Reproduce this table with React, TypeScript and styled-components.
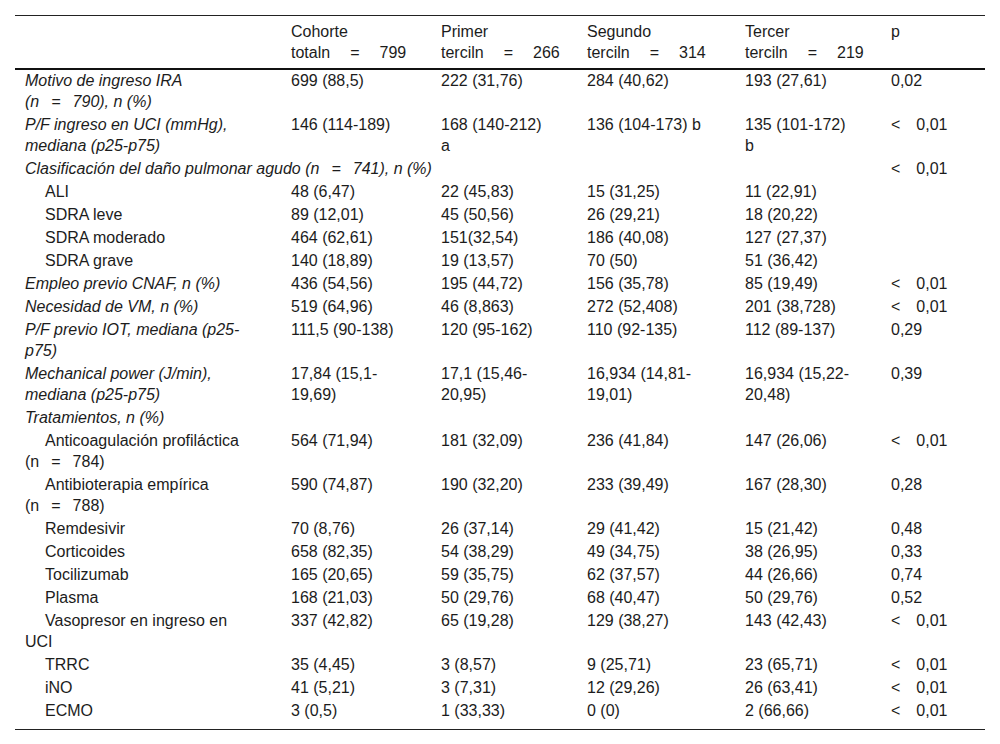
import { createGlobalStyle, styled } from 'styled-components';

const GlobalStyle = createGlobalStyle`
  body {
    margin: 0;
    background: #fff;
    font-family: 'Liberation Sans', Arial, sans-serif;
    color: #1c1c1c;
  }
`;

const Page = styled.div`
  padding: 15px 15px 0 15px;
`;

const Table = styled.table`
  width: 970px;
  border-collapse: collapse;
  table-layout: fixed;
  font-size: 16px;
  line-height: 21px;
  border-top: 1px solid #222;
  border-bottom: 1px solid #222;
`;

const HeadCell = styled.th`
  text-align: left;
  font-weight: normal;
  vertical-align: top;
  padding: 5px 34px 5px 10px;
  border-bottom: 2px solid #111;

  &:nth-child(5) {
    padding-right: 30px;
  }

  &:last-child {
    padding-right: 10px;
  }
`;

const Cell = styled.td<{ $italic?: boolean; $indent?: boolean }>`
  vertical-align: top;
  padding: 1px 34px 1px 10px;
  font-style: ${(p) => (p.$italic ? 'italic' : 'normal')};
  text-indent: ${(p) => (p.$indent ? '20px' : '0')};

  &:nth-child(5) {
    padding-right: 30px;
  }

  &:last-child {
    padding-right: 10px;
  }
`;

const FirstRow = styled.tr`
  td {
    padding-top: 0;
  }
`;

const LastRow = styled.tr`
  td {
    padding-bottom: 8px;
  }
`;

const Keep = styled.span`
  white-space: nowrap;
`;

const Gap = styled.span<{ $w: number }>`
  display: inline-block;
  width: ${(p) => p.$w}px;
`;

// "(n = 790)" style counts never break inside
const N = ({ pre = '(n', v, post = ')', w = 12 }: { pre?: string; v: string; post?: string; w?: number }) => (
  <Keep>
    {pre}
    <Gap $w={w} />=<Gap $w={w} />
    {v}
    {post}
  </Keep>
);

const Lt = () => (
  <Keep>
    {'<'}
    <Gap $w={16} />
    {'0,01'}
  </Keep>
);

type Row = {
  label: React.ReactNode;
  italic?: boolean;
  indent?: boolean;
  cells: React.ReactNode[];
  p: React.ReactNode;
};

const rows: Row[] = [
  {
    label: 'P/F ingreso en UCI (mmHg), mediana (p25-p75)',
    italic: true,
    cells: ['146 (114-189)', '168 (140-212) a', '136 (104-173) b', '135 (101-172) b'],
    p: <Lt />,
  },
];

const lungRows: Row[] = [
  { label: 'ALI', indent: true, cells: ['48 (6,47)', '22 (45,83)', '15 (31,25)', '11 (22,91)'], p: '' },
  { label: 'SDRA leve', indent: true, cells: ['89 (12,01)', '45 (50,56)', '26 (29,21)', '18 (20,22)'], p: '' },
  { label: 'SDRA moderado', indent: true, cells: ['464 (62,61)', '151(32,54)', '186 (40,08)', '127 (27,37)'], p: '' },
  { label: 'SDRA grave', indent: true, cells: ['140 (18,89)', '19 (13,57)', '70 (50)', '51 (36,42)'], p: '' },
  { label: 'Empleo previo CNAF, n (%)', italic: true, cells: ['436 (54,56)', '195 (44,72)', '156 (35,78)', '85 (19,49)'], p: <Lt /> },
  { label: 'Necesidad de VM, n (%)', italic: true, cells: ['519 (64,96)', '46 (8,863)', '272 (52,408)', '201 (38,728)'], p: <Lt /> },
  { label: 'P/F previo IOT, mediana (p25-p75)', italic: true, cells: ['111,5 (90-138)', '120 (95-162)', '110 (92-135)', '112 (89-137)'], p: '0,29' },
  {
    label: 'Mechanical power (J/min), mediana (p25-p75)',
    italic: true,
    cells: ['17,84 (15,1-19,69)', '17,1 (15,46-20,95)', '16,934 (14,81-19,01)', '16,934 (15,22-20,48)'],
    p: '0,39',
  },
];

const treatments: Row[] = [
  {
    label: (
      <>
        Anticoagulación profiláctica <N v="784" />
      </>
    ),
    indent: true,
    cells: ['564 (71,94)', '181 (32,09)', '236 (41,84)', '147 (26,06)'],
    p: <Lt />,
  },
  {
    label: (
      <>
        Antibioterapia empírica <N v="788" />
      </>
    ),
    indent: true,
    cells: ['590 (74,87)', '190 (32,20)', '233 (39,49)', '167 (28,30)'],
    p: '0,28',
  },
  { label: 'Remdesivir', indent: true, cells: ['70 (8,76)', '26 (37,14)', '29 (41,42)', '15 (21,42)'], p: '0,48' },
  { label: 'Corticoides', indent: true, cells: ['658 (82,35)', '54 (38,29)', '49 (34,75)', '38 (26,95)'], p: '0,33' },
  { label: 'Tocilizumab', indent: true, cells: ['165 (20,65)', '59 (35,75)', '62 (37,57)', '44 (26,66)'], p: '0,74' },
  { label: 'Plasma', indent: true, cells: ['168 (21,03)', '50 (29,76)', '68 (40,47)', '50 (29,76)'], p: '0,52' },
  { label: 'Vasopresor en ingreso en UCI', indent: true, cells: ['337 (42,82)', '65 (19,28)', '129 (38,27)', '143 (42,43)'], p: <Lt /> },
  { label: 'TRRC', indent: true, cells: ['35 (4,45)', '3 (8,57)', '9 (25,71)', '23 (65,71)'], p: <Lt /> },
  { label: 'iNO', indent: true, cells: ['41 (5,21)', '3 (7,31)', '12 (29,26)', '26 (63,41)'], p: <Lt /> },
];

const renderRow = (r: Row, i: number) => (
  <tr key={i}>
    <Cell $italic={r.italic} $indent={r.indent}>
      {r.label}
    </Cell>
    {r.cells.map((c, j) => (
      <Cell key={j}>{c}</Cell>
    ))}
    <Cell>{r.p}</Cell>
  </tr>
);

const heads = [
  ['Cohorte', 'total', '799'],
  ['Primer', 'tercil', '266'],
  ['Segundo', 'tercil', '314'],
  ['Tercer', 'tercil', '219'],
];

export default function App() {
  return (
    <>
      <GlobalStyle />
      <Page>
        <Table>
          <colgroup>
            <col style={{ width: 266 }} />
            <col style={{ width: 150 }} />
            <col style={{ width: 146 }} />
            <col style={{ width: 158 }} />
            <col style={{ width: 146 }} />
            <col style={{ width: 104 }} />
          </colgroup>
          <thead>
            <tr>
              <HeadCell />
              {heads.map(([a, b, n]) => (
                <HeadCell key={a}>
                  {a} <N pre={`${b}n`} v={n} post="" w={20} />
                </HeadCell>
              ))}
              <HeadCell>p</HeadCell>
            </tr>
          </thead>
          <tbody>
            <FirstRow>
              <Cell $italic>
                Motivo de ingreso IRA <N v="790" post="), n (%)" />
              </Cell>
              <Cell>699 (88,5)</Cell>
              <Cell>222 (31,76)</Cell>
              <Cell>284 (40,62)</Cell>
              <Cell>193 (27,61)</Cell>
              <Cell>0,02</Cell>
            </FirstRow>
            {rows.map(renderRow)}
            <tr>
              <Cell $italic colSpan={5}>
                Clasificación del daño pulmonar agudo <N v="741" post="), n (%)" />
              </Cell>
              <Cell>
                <Lt />
              </Cell>
            </tr>
            {lungRows.map((r, i) => renderRow(r, i + 10))}
            <tr>
              <Cell $italic colSpan={6}>
                Tratamientos, n (%)
              </Cell>
            </tr>
            {treatments.map((r, i) => renderRow(r, i + 100))}
            <LastRow>
              <Cell $indent>ECMO</Cell>
              <Cell>3 (0,5)</Cell>
              <Cell>1 (33,33)</Cell>
              <Cell>0 (0)</Cell>
              <Cell>2 (66,66)</Cell>
              <Cell>
                <Lt />
              </Cell>
            </LastRow>
          </tbody>
        </Table>
      </Page>
    </>
  );
}
